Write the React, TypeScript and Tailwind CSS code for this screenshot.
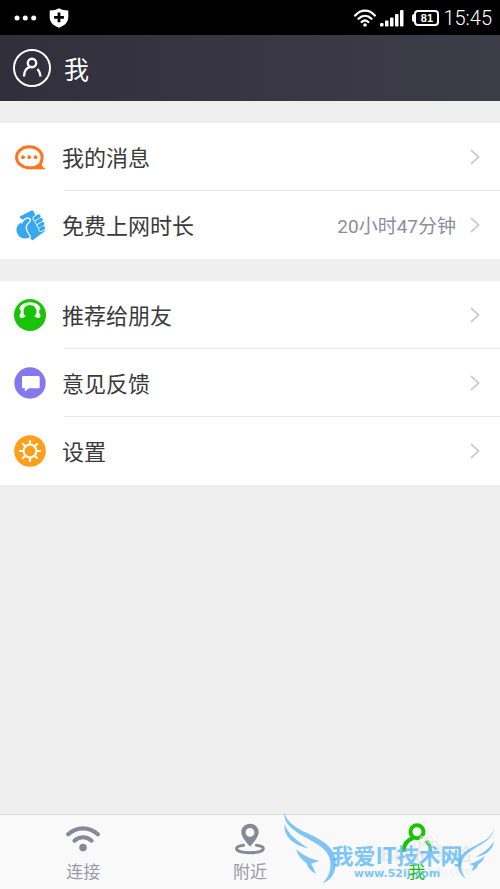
import type { ReactNode } from "react";

interface RowProps {
  icon: ReactNode;
  label: string;
  value?: string;
  divided?: boolean;
}

interface TabProps {
  icon: ReactNode;
  label: string;
  active?: boolean;
}

function MessageIcon() {
  return (
    <svg viewBox="0 0 32 32" className="h-8 w-8" fill="none">
      <path d="M26.500 22.600c-2.400 3-6.100 4.200-11 4.200C7.900 26.800 2.600 22 2.600 16.200S7.900 5.800 15.300 5.800s12.800 4.600 12.800 10.400c0 2.400-.7 4.500-1.600 6.400Z" stroke="#ff7420" strokeWidth="3" />
      <path d="M13 28.300h17.300c1.100 0 1.200-.9.300-1.300-1.800-.8-2.900-2.400-2.800-4.700l-3 1.500-3 2.200Z" fill="#ff7420" />
      <circle cx="9" cy="16.200" r="1.900" fill="#ff7420" />
      <circle cx="15.200" cy="16.200" r="1.900" fill="#ff7420" />
      <circle cx="21.500" cy="16.200" r="1.900" fill="#ff7420" />
    </svg>
  );
}

function FistIcon() {
  return (
    <svg viewBox="0 0 32 32" className="h-8 w-8" fill="none">
      <circle cx="11" cy="21" r="8.600" fill="#36a9ee" />
      <path d="M6.300 7.200 17.600 1.600c.8-.4 1.400-.2 1.800.5l2.100 4L31 20.300c.5.900.3 1.600-.5 2.100L19.300 30.800c-.8.600-1.500.4-2-.4l-2.800-4.600L7 14.500l2.500-3.300-3.500-2.500c-.4-.6-.3-1.200.3-1.500Z" fill="#36a9ee" />
      <g stroke="#fff" strokeWidth="5.200" strokeLinecap="round">
        <path d="m21.200 9.300 3.600-2.200M23.200 13l3.800-2.300M25.200 16.800l3.400-2M26.900 20.300l2.500-1.400" />
      </g>
      <g stroke="#36a9ee" strokeWidth="3.600" strokeLinecap="round">
        <path d="m21.200 9.300 3.600-2.200M23.200 13l3.800-2.300M25.200 16.800l3.400-2M26.900 20.300l2.500-1.400" />
      </g>
      <path d="M7.600 14.500c1-2.800 3-4.700 5.500-5.300 2.600-.5 4 1.500 2.800 3.300-1 1.500-2.700 2.300-3.300 4-.8 2.300-.2 4.300 1.100 6.700l3.200 5.300" stroke="#fff" strokeWidth="1.300" />
    </svg>
  );
}

function FriendIcon() {
  return (
    <svg viewBox="0 0 32 32" className="h-8 w-8">
      <circle cx="16" cy="16" r="16" fill="#18c406" />
      <path d="M7.200 6.200C9.700 4.300 12.600 3.200 16 3.200s6.300 1.100 8.800 3l1.900 3.200-1.400 2.100c-.3 2 .1 3.800 1.500 5.200l-1.500 2.300-2.500-.2-2.600-1.500c1.600-1.200 2.300-2.700 2.300-4.700 0-3.800-2.800-6.600-6.500-6.600s-6.500 2.800-6.500 6.600c0 2 .7 3.500 2.300 4.700l-2.600 1.500-2.500.2-1.500-2.300c1.400-1.400 1.800-3.200 1.500-5.200L5.300 9.400Z" fill="#fff" />
    </svg>
  );
}

function FeedbackIcon() {
  return (
    <svg viewBox="0 0 32 32" className="h-8 w-8">
      <circle cx="16" cy="16" r="15.700" fill="#8577ed" />
      <path d="M9.500 9h14.700c1 0 1.500.5 1.500 1.500v9.300c0 1-.5 1.500-1.500 1.500H15L11.600 24c-.5.400-.8.200-.8-.3v-2.400H9.500c-1 0-1.500-.5-1.500-1.500v-9.300C8 9.500 8.500 9 9.500 9Z" fill="#fff" />
    </svg>
  );
}

function SettingsIcon() {
  return (
    <svg viewBox="0 0 32 32" className="h-8 w-8" fill="none">
      <circle cx="16" cy="16" r="15.800" fill="#ff9f1c" />
      <circle cx="16" cy="16" r="6.400" stroke="#fff" strokeWidth="2" />
      <path
        d="M16 9V6M16 26v-3M9 16H6M26 16h-3M11 11 9 9M23 23l-2-2M11 21l-2 2M23 9l-2 2"
        stroke="#fff"
        strokeWidth="2.200"
        strokeLinecap="round"
      />
    </svg>
  );
}

function WifiTabIcon() {
  return (
    <svg viewBox="0 0 34 32" className="h-8 w-[34px]" fill="none" stroke="currentColor" strokeLinecap="round">
      <path d="M2.200 11.300C11 3.300 23 3.300 31.800 11.300" strokeWidth="4.200" />
      <path d="M8.500 17.700c5-4.600 12-4.600 17 0" strokeWidth="4.200" />
      <circle cx="17" cy="24.600" r="3.800" fill="currentColor" stroke="none" />
    </svg>
  );
}

function NearbyIcon() {
  return (
    <svg viewBox="0 0 34 32" className="h-8 w-[34px]">
      <path
        fillRule="evenodd"
        d="M17 .8c5 0 8.700 3.700 8.700 8.300 0 4.300-3.600 8.900-8.700 14.500C11.900 18 8.300 13.400 8.300 9.100 8.300 4.500 12 .8 17 .8Zm0 4.200a4.400 4.400 0 1 0 0 8.800A4.400 4.400 0 0 0 17 5Z"
        fill="currentColor"
      />
      <path d="M10.500 22.300c-4 .5-6.900 1.700-6.900 3.300 0 2.600 5.700 4.100 13.400 4.100s13.400-1.500 13.400-4.100c0-1.600-2.900-2.800-6.900-3.300" fill="none" stroke="currentColor" strokeWidth="3" strokeLinecap="round" />
    </svg>
  );
}

function MeTabIcon() {
  return (
    <svg viewBox="0 0 34 32" className="h-8 w-[34px]" fill="none" stroke="currentColor" strokeWidth="4">
      <circle cx="17" cy="8.800" r="6.500" />
      <path d="M3.700 29c0-7.500 3.700-12.300 9.500-14" />
      <path d="M24.500 18.500 28 17c2.500 3 4 6.500 4.300 11l-2.600 1c-.8-4-2.400-7.500-5.200-10.500Z" fill="currentColor" stroke="none" />
    </svg>
  );
}

function Row({ icon, label, value, divided }: RowProps) {
  return (
    <li className="relative">
      <button type="button" className="flex h-[68px] w-full items-center pr-5 pl-3.5 text-left">
        <span className="shrink-0">{icon}</span>
        <span className="ml-4 flex-1 pb-0.5 text-[22px] leading-8 text-[#3a3a3a]">{label}</span>
        {value && (
          <span className="mr-3.5 pt-1 font-[Roboto,'Noto_Sans_CJK_SC',sans-serif] text-[19px] leading-8 text-[#8e8ca0]">
            {value}
          </span>
        )}
        <svg viewBox="0 0 10 16" className="h-4 w-2.5 shrink-0" fill="none" stroke="#c4c4c6" strokeWidth="1.600">
          <path d="m1 1 7.500 7L1 15" />
        </svg>
      </button>
      {divided && <div className="absolute right-0 bottom-0 left-16 h-px bg-[#e9e9e9]" />}
    </li>
  );
}

function Tab({ icon, label, active }: TabProps) {
  return (
    <button
      type="button"
      className={`flex flex-1 flex-col items-center pt-2 ${active ? "text-[#18c406]" : "text-[#868a98]"}`}
    >
      {icon}
      <span className={`mt-1 text-[17px] leading-6 ${active ? "" : "text-[#9a99ac]"}`}>{label}</span>
    </button>
  );
}

function StatusBar() {
  return (
    <div className="flex h-[35px] items-center justify-between bg-black pr-2 pl-3.5 text-white">
      <div className="flex items-center gap-3">
        <svg viewBox="0 0 23 6" className="h-1.5 w-[23px]" fill="currentColor">
          <circle cx="3" cy="3" r="2.500" />
          <circle cx="11.300" cy="3" r="2.500" />
          <circle cx="19.700" cy="3" r="2.500" />
        </svg>
        <svg viewBox="0 0 20 20" className="h-5 w-5">
          <path d="M10 .3c2.500 1.500 5.500 2.200 9.300 2.200V9c0 5-3.300 8.500-9.300 10.700C4 17.500.7 14 .7 9V2.500C4.500 2.500 7.500 1.800 10 .3Z" fill="currentColor" />
          <path d="M10 4.500v9.800M5.100 9.400h9.800" stroke="#000" strokeWidth="2.800" />
        </svg>
      </div>
      <div className="flex items-center">
        <svg viewBox="0 0 22 18" className="h-[18px] w-[22px]" fill="none" stroke="currentColor" strokeWidth="2.300" strokeLinecap="round">
          <path d="M1.200 6.500C7 .1 15 .1 20.800 6.500M4.500 9.800c4-4 9-4 13 0M7.700 13c2-1.900 4.600-1.900 6.600 0" />
          <circle cx="11" cy="16" r="1.800" fill="currentColor" stroke="none" />
        </svg>
        <svg viewBox="0 0 24 18" className="ml-1 h-[18px] w-6" fill="currentColor">
          <rect x="0" y="14" width="3.500" height="3.500" rx="1.200" />
          <rect x="5" y="11.500" width="3.500" height="6" rx="1" />
          <rect x="10" y="8.500" width="3.500" height="9" rx="1" />
          <rect x="15" y="5" width="3.500" height="12.500" rx="1" />
          <rect x="20" y="1" width="3.500" height="16.500" rx="1" />
        </svg>
        <div className="ml-2 flex items-center">
          <span className="h-2 w-0.5 rounded-l bg-white" />
          <span className="flex h-4 w-[25px] items-center justify-center rounded border-2 border-white font-['Liberation_Sans',sans-serif] text-[11px] leading-3 font-bold">
            81
          </span>
        </div>
        <span className="ml-1 font-[Roboto,sans-serif] text-xl leading-6 font-light">15:45</span>
      </div>
    </div>
  );
}

function Watermark() {
  return (
    <div className="pointer-events-none absolute right-0 bottom-0 h-[89px] w-[230px]">
      {/* pale stamp behind the site name */}
      <div className="absolute top-[35px] right-7 flex flex-col items-center text-black/8">
        <svg viewBox="0 0 26 22" className="h-[22px] w-[26px]" fill="#fff" fillOpacity="0.35" stroke="#dcdcdc" strokeWidth="0.700">
          <ellipse cx="4" cy="10" rx="2.800" ry="3.800" />
          <ellipse cx="9.500" cy="5" rx="2.800" ry="4" />
          <ellipse cx="16.500" cy="5" rx="2.800" ry="4" />
          <ellipse cx="22" cy="10" rx="2.800" ry="3.800" />
          <path d="M13 10c4 0 8 5 8 8s-4 3.500-8 3-8 0-8-3 4-8 8-8Z" />
        </svg>
        <span className="-mt-3 font-['Liberation_Sans','Noto_Sans_CJK_SC',sans-serif] text-[18px] leading-5 font-bold whitespace-nowrap">
          Baidu 经验
        </span>
        <span className="font-['Liberation_Sans',sans-serif] text-[11px] leading-3 whitespace-nowrap">
          jingyan.baidu.com
        </span>
      </div>
      <svg viewBox="0 0 690 267" className="absolute inset-0 h-full w-full" fill="#70bff5" fillOpacity="0.9">
        <path d="M43 38c8 28 34 46 70 62 48 22 84 45 84 88 0 32-14 53-39 61 18-17 25-37 23-62-3-37-37-54-77-76C67 90 40 69 43 38Z" />
        <path d="M44 72c8 28 35 49 70 73-42-10-75-35-70-73Z" />
        <path d="M79 148c18 17 40 28 69 35l-24 8 14 30c-15-7-25-18-29-32-14-9-26-23-30-41Z" />
        <path d="M672 88c-7 22-27 35-54 48-33 16-52 32-54 54-2 20 8 37 26 48-14-14-18-29-15-48 4-25 28-38 54-54 24-14 40-28 43-48Z" />
        <path d="M671 122c-8 20-28 34-54 49 32-6 54-22 54-49Z" />
        <path d="M644 167c-12 12-28 20-47 25l14 5-6 17c12-5 18-12 20-21 10-6 17-15 19-26Z" />
      </svg>
      <div className="absolute top-[41px] left-[61px] flex w-[132px] flex-col items-center text-[#5db8f8]/80">
        <span className="text-[22px] leading-[26px] font-bold whitespace-nowrap">我爱IT技术网</span>
        <span className="font-['DejaVu_Sans',sans-serif] text-[11px] leading-[14px] font-bold whitespace-nowrap">
          www.52ij.com
        </span>
      </div>
    </div>
  );
}

export default function App() {
  return (
    <div className="relative flex min-h-screen flex-col bg-[#efefef] font-['Noto_Sans_CJK_SC',sans-serif]">
      <StatusBar />

      <header className="flex h-[66px] items-center bg-gradient-to-r from-[#322f3d] to-[#3d3d48] pl-3 text-white">
        <svg viewBox="0 0 40 40" className="h-10 w-10" fill="none" stroke="currentColor" strokeWidth="2">
          <circle cx="20" cy="20" r="18" />
          <circle cx="20" cy="15" r="4.200" strokeWidth="2.400" />
          <path d="M12 28.500c0-5.500 2.500-8.800 6.500-9.700" strokeWidth="2.400" />
          <path d="M25.500 21c1.800 2 2.700 4.500 3 7.500" strokeWidth="2.400" />
        </svg>
        <h1 className="ml-3 text-[25px] leading-9">我</h1>
      </header>

      <main className="flex flex-1 flex-col gap-[22px] pt-[22px]">
        <ul className="bg-white">
          <Row icon={<MessageIcon />} label="我的消息" divided />
          <Row icon={<FistIcon />} label="免费上网时长" value="20小时47分钟" />
        </ul>
        <ul className="bg-white">
          <Row icon={<FriendIcon />} label="推荐给朋友" divided />
          <Row icon={<FeedbackIcon />} label="意见反馈" divided />
          <Row icon={<SettingsIcon />} label="设置" />
        </ul>
      </main>

      <nav className="flex h-[75px] border-t border-[#dcdcdc] bg-[#f9f9f9]">
        <Tab icon={<WifiTabIcon />} label="连接" />
        <Tab icon={<NearbyIcon />} label="附近" />
        <Tab icon={<MeTabIcon />} label="我" active />
      </nav>

      <Watermark />
    </div>
  );
}
